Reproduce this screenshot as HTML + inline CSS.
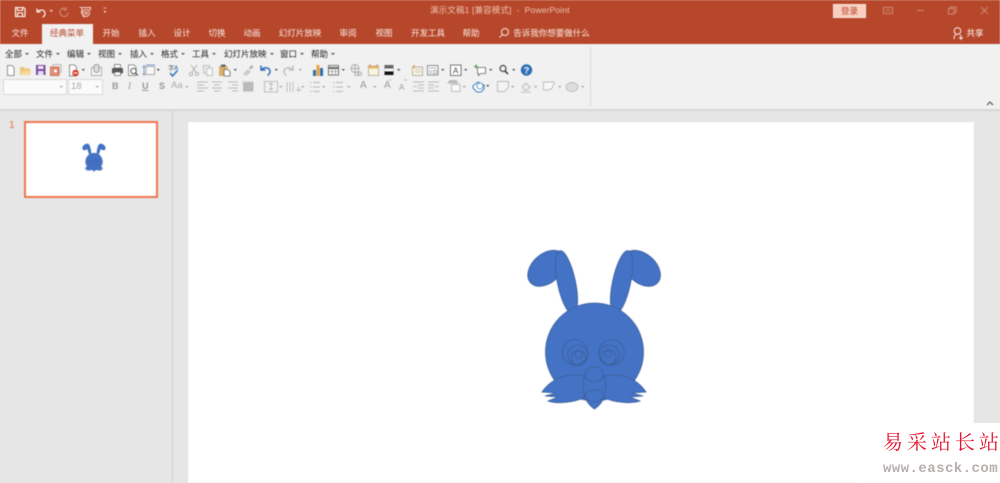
<!DOCTYPE html>
<html lang="zh"><head><meta charset="utf-8"><style>
html,body{margin:0;padding:0;width:1000px;height:483px;overflow:hidden;background:#e6e6e6}
body{position:relative;font-family:"Liberation Sans","Noto Sans CJK SC",sans-serif}
#w{position:absolute;left:0;top:0;width:1000px;height:483px;filter:blur(.4px)}
.a{position:absolute;white-space:nowrap}
.t{position:absolute;top:27px;height:12px;line-height:12px;font-size:8.5px;color:#f9ebe6;transform:translateX(-50%);white-space:nowrap}
.m{position:absolute;top:48px;height:12px;line-height:12px;font-size:8.5px;color:#222;white-space:nowrap}
.m:after{content:"";display:inline-block;border:2px solid transparent;border-top:2.5px solid #555;border-bottom:0;margin-left:3px;vertical-align:2px}
svg{position:absolute;left:0;top:0}
</style></head><body>
<div id="w">
<div class="a" style="left:0;top:0;width:1000px;height:44px;background:#b7472a"></div>
<div class="a" style="left:0;top:44px;width:1000px;height:65px;background:#f1f1f1"></div>
<div class="a" style="left:0;top:109px;width:1000px;height:2px;background:#d6d6d6"></div>
<div class="a" style="left:172px;top:111px;width:1px;height:372px;background:#cfcfcf"></div>
<div class="a" style="left:42px;top:24px;width:51px;height:21px;background:#f1f1f1"></div>
<div class="a" style="left:188px;top:122px;width:786px;height:361px;background:#fff;box-shadow:0 0 1px #ccc"></div>
<div class="a" style="left:24px;top:121px;width:130px;height:73px;background:#fff;border:2px solid #f0774f"></div>
<div class="a" style="left:9px;top:120px;font-size:10px;line-height:12px;color:#e8704a">1</div>

<div class="a" style="left:430px;top:4px;font-size:8.5px;line-height:12px;color:#f0c4b5;letter-spacing:.15px">演示文稿1 [兼容模式] &nbsp;- &nbsp;PowerPoint</div>
<div class="a" style="left:833px;top:4px;width:31px;height:12px;background:#f9cfc1;border:.5px solid #f4e4dd;text-align:center;font-size:8.5px;line-height:13px;color:#b7472a">登录</div>

<div class="t" style="left:20px">文件</div>
<div class="t" style="left:67px;color:#b7472a">经典菜单</div>
<div class="t" style="left:111px">开始</div>
<div class="t" style="left:147px">插入</div>
<div class="t" style="left:182px">设计</div>
<div class="t" style="left:217px">切换</div>
<div class="t" style="left:252px">动画</div>
<div class="t" style="left:300px">幻灯片放映</div>
<div class="t" style="left:348px">审阅</div>
<div class="t" style="left:384px">视图</div>
<div class="t" style="left:428px">开发工具</div>
<div class="t" style="left:471px">帮助</div>
<div class="t" style="left:551.5px">告诉我你想要做什么</div>
<div class="t" style="left:975px;color:#fff">共享</div>

<div class="m" style="left:5px">全部</div>
<div class="m" style="left:36px">文件</div>
<div class="m" style="left:67px">编辑</div>
<div class="m" style="left:98px">视图</div>
<div class="m" style="left:130px">插入</div>
<div class="m" style="left:161px">格式</div>
<div class="m" style="left:192px">工具</div>
<div class="m" style="left:224px">幻灯片放映</div>
<div class="m" style="left:280px">窗口</div>
<div class="m" style="left:311px">帮助</div>

<div class="a" style="left:3px;top:79px;width:62px;height:14px;background:#fbfbfb;border:1px solid #d8d8d8;box-sizing:content-box"></div>
<div class="a" style="left:68px;top:79px;width:33px;height:14px;background:#fbfbfb;border:1px solid #d8d8d8"></div>
<div class="a" style="left:71px;top:81px;font-size:9.5px;line-height:12px;color:#aaa">18</div>
<div class="a" style="left:112px;top:80px;font-size:9px;line-height:12px;font-weight:bold;color:#999">B</div>
<div class="a" style="left:128px;top:80px;font-size:9px;line-height:12px;font-style:italic;font-family:'Liberation Serif',serif;color:#999">I</div>
<div class="a" style="left:142px;top:80px;font-size:9px;line-height:12px;font-weight:bold;color:#999;text-decoration:underline">U</div>
<div class="a" style="left:159px;top:80px;font-size:9px;line-height:12px;font-weight:bold;color:#999">S</div>
<div class="a" style="left:171px;top:80px;font-size:9.5px;line-height:12px;color:#aaa">Aa</div>
<div class="a" style="left:360px;top:80px;font-size:10px;line-height:12px;color:#999">A</div>
<div class="a" style="left:384px;top:80px;font-size:10px;line-height:12px;color:#999">A</div>
<div class="a" style="left:399px;top:82px;font-size:8px;line-height:12px;color:#999">A</div>

<svg width="1000" height="483" viewBox="0 0 1000 483">
<defs>
<g id="rabbit" fill="#4472c4" stroke="#3c5f9c" stroke-width=".8">
<ellipse cx="546.500" cy="268.300" rx="21.500" ry="14.500" transform="rotate(-42 546.500 268.300)"/>
<ellipse cx="641.700" cy="268.300" rx="21.500" ry="14.500" transform="rotate(42 641.700 268.300)"/>
<ellipse cx="566.500" cy="282.500" rx="9" ry="32.500" transform="rotate(-12 566.500 282.500)"/>
<ellipse cx="621.500" cy="282.500" rx="9" ry="32.500" transform="rotate(12 621.500 282.500)"/>
<circle cx="594.500" cy="352" r="49"/>
<g fill="none">
<circle cx="575" cy="352.300" r="12.700"/><circle cx="577.700" cy="355" r="10"/><circle cx="578.300" cy="358" r="7.500"/><circle cx="578.700" cy="354.300" r="3.700"/>
<circle cx="611.700" cy="352.300" r="12.700"/><circle cx="609.300" cy="355" r="10"/><circle cx="608.700" cy="357.300" r="7.300"/><circle cx="608.300" cy="354" r="3.300"/>
</g>
<path d="M587 377C572 372 553 376 542 392L556 393 545 396 558 397 548 401 C556 404 574 403 585 397Z"/>
<path d="M602 377C617 372 635 376 646 392L632 393 643 396 630 397 640 401 C632 404 614 403 603 397Z"/>
<path d="M584 378C582 392 584 402 594.500 409 605 402 607 392 605 378Z"/>
<ellipse cx="594.300" cy="374.300" rx="9" ry="7.500"/>
<ellipse cx="594.300" cy="395.700" rx="9" ry="6"/>
</g>
</defs>
<use href="#rabbit"/>
<g transform="translate(-10 100) scale(.175)"><use href="#rabbit"/></g>

<!-- QAT -->
<g fill="none" stroke="#fff" stroke-width="1.1">
<path d="M15.500 7.500h8l1.500 1.500v7.500h-9.500z"/><path d="M17.500 7.500v3h5v-3M17.500 16.500v-3.500h5v3.500"/>
<path d="M37 8.500v3.500h3.500M37.500 12c2-3 7-2.500 7.500 1 .2 2-1 3.500-2.500 4"/>
</g>
<path d="M49.500 10h3.500l-1.750 2z M103.500 11h3l-1.500 2z" fill="#f4dcd3"/>
<g fill="none" stroke="#cf8a75" stroke-width="1.1"><path d="M66 7v3h-3M66 9c-3-2-6 0-6 3s3 5 5 4.500 3-2 3-4"/></g>
<g fill="none" stroke="#f2d7cd" stroke-width="1"><path d="M79.500 7.500h11v2h-1.500M82 8v3.500"/><circle cx="86" cy="13" r="3.500"/><circle cx="86" cy="13" r="1.300"/><path d="M81 11.500l3 6"/></g>
<path d="M103.500 8h3" stroke="#f2d7cd" stroke-width=".8"/>

<!-- win controls -->
<g fill="none" stroke="#cf8a75" stroke-width="1">
<rect x="883.500" y="7.500" width="9" height="6"/><path d="M886 11.500l2-2 2 2"/>
<path d="M917 10.500h7"/>
<rect x="948.500" y="8.500" width="5.500" height="5.500"/><path d="M950.500 8.500v-1.500h5.500v5.500h-2"/>
<path d="M981 7l7 7M988 7l-7 7"/>
</g>
<!-- search tell me -->
<g fill="none" stroke="#f6e3dc" stroke-width="1"><circle cx="505" cy="32" r="3.500"/><path d="M502.500 34.500l-3 3"/></g>
<!-- share -->
<g fill="none" stroke="#fff" stroke-width=".9"><circle cx="957.500" cy="31" r="3.300"/><path d="M954 39c0-2.500 1-4 2-4.500M960 35l1 1M959 38h4M961 36v4"/></g>

<!-- row 2 -->
<path d="M7.500 65.500h4.500l2 2v8h-6.500z" fill="#fff" stroke="#777" stroke-width=".8"/>
<path d="M20 75v-8h4l1 1.500h5v6.500z" fill="#f0c47a"/><path d="M20 75l2-4h9.500l-2 4z" fill="#f6d699"/>
<rect x="36" y="65" width="9.500" height="10" fill="#7a4a9e"/><rect x="38" y="66" width="5.500" height="3" fill="#f1e8f5"/><rect x="38" y="71" width="5.500" height="4" fill="#e7dcee"/>
<rect x="53" y="64.500" width="8" height="8" fill="#f1f1f1" stroke="#aaa" stroke-width=".8"/><rect x="50.500" y="67" width="8.500" height="8.500" fill="#e49a84" stroke="#c9563c" stroke-width=".8"/><rect x="53.500" y="69" width="4" height="4" fill="#fff" stroke="#c9563c" stroke-width=".7"/>
<path d="M69.500 65h5l2 2v9h-7z" fill="#fff" stroke="#777" stroke-width=".8"/><circle cx="75.500" cy="73" r="3.300" fill="#d8442d"/><path d="M73.500 73h4" stroke="#fff" stroke-width="1"/>
<rect x="91.500" y="67.500" width="10" height="8" fill="#fbfbfb" stroke="#999" stroke-width=".8"/><rect x="94" y="64.500" width="5" height="8" rx="2" fill="#ddd" stroke="#888" stroke-width=".8"/>
<rect x="112" y="68" width="11" height="5.500" rx="1" fill="#555"/><rect x="114.500" y="64.500" width="6" height="3.500" fill="#fff" stroke="#666" stroke-width=".7"/><rect x="114.500" y="72" width="6" height="3.500" fill="#fff" stroke="#666" stroke-width=".7"/>
<path d="M128.500 65h5.500l2 2v8.500h-7.500z" fill="#fff" stroke="#777" stroke-width=".8"/><circle cx="133.500" cy="71" r="2.700" fill="#fff" stroke="#555" stroke-width="1"/><path d="M135.500 73l2.500 2.500" stroke="#555" stroke-width="1.100"/>
<rect x="146" y="66.500" width="8.500" height="8" fill="#f8f8f8" stroke="#999" stroke-width=".8"/><path d="M144 65v11M142.500 67h3M142.500 74h3" stroke="#5b8ac4" stroke-width=".8" fill="none"/><path d="M146 65h9" stroke="#5b8ac4" stroke-width=".8"/>
<text x="168" y="70" font-size="6.500" fill="#666" font-family="'Noto Sans CJK SC',sans-serif">字</text><text x="174" y="70" font-size="6" font-weight="bold" fill="#3a76b8">A</text><path d="M170 73l2.500 3 5-5.500" fill="none" stroke="#2b6fb6" stroke-width="1.400"/>
<g fill="none" stroke="#aaa" stroke-width=".9"><path d="M191 65l5 7M197 65l-5 7"/><circle cx="191" cy="74" r="1.700"/><circle cx="197" cy="74" r="1.700"/></g>
<rect x="203.500" y="65.500" width="6" height="7.500" fill="#eee" stroke="#b5b5b5" stroke-width=".8"/><rect x="206.500" y="68" width="6" height="7.500" fill="#f4f4f4" stroke="#b5b5b5" stroke-width=".8"/>
<rect x="219" y="66" width="8.500" height="10" fill="#dcb069"/><rect x="221" y="64.500" width="4.500" height="2.500" fill="#666"/><path d="M224 69.500h4l2 2v4.500h-6z" fill="#fff" stroke="#666" stroke-width=".8"/>
<path d="M243 74l5-5 3 3-5 4z" fill="#ccc"/><path d="M249 68l3-3 1.500 1.500-3 3z" fill="#aaa"/>
<g fill="none" stroke="#2f6fb7" stroke-width="1.500"><path d="M261 65.500v4.500h4.500M261.500 70c2.500-3.500 8-2.500 8.500 1 .2 2-1 3.500-2.500 4.500"/></g>
<g fill="none" stroke="#bbb" stroke-width="1.300"><path d="M293 65.500v4.500h-4.500M292.500 70c-2.500-3.500-8-2.500-8.500 1-.2 2 1 3.500 2.500 4.500"/></g>
<rect x="313" y="70" width="3" height="6" fill="#2f6fa8"/><rect x="316.500" y="65" width="3" height="11" fill="#e8a33d"/><rect x="320" y="68" width="3" height="8" fill="#2f6fa8"/>
<rect x="328.500" y="65.500" width="10" height="9.500" fill="#fff" stroke="#666" stroke-width=".9"/><path d="M328.500 68h10" stroke="#666" stroke-width="2"/><path d="M328.500 71.500h10M332 68v7M335.500 68v7" stroke="#777" stroke-width=".6"/>
<g fill="none" stroke="#aaa" stroke-width=".9"><circle cx="355" cy="68.500" r="4"/><path d="M351 68.500h8M355 64.500v8"/><rect x="355" y="72" width="3.500" height="3.500" rx="1.500"/><rect x="358" y="72" width="3.500" height="3.500" rx="1.500"/></g>
<rect x="368.500" y="66" width="10" height="9.500" fill="#fbf3dc" stroke="#999" stroke-width=".7"/><path d="M370 67v-2.500M377 67v-2.500" stroke="#d95a40" stroke-width="1"/><path d="M369 66h9v2.500h-9z" fill="#e9b65f"/>
<rect x="384.500" y="65" width="9" height="3.500" fill="#666"/><rect x="384.500" y="68.500" width="9" height="3" fill="#fff" stroke="#999" stroke-width=".4"/><rect x="384.500" y="71.500" width="9" height="3.500" fill="#111"/>
<rect x="412.500" y="67" width="10" height="8.500" fill="#fbf3dc" stroke="#999" stroke-width=".7"/><path d="M414 65v3" stroke="#e0a23d" stroke-width="1.500"/><path d="M415 69.500h6M415 72h6" stroke="#bbb" stroke-width=".7"/>
<rect x="427.500" y="65.500" width="10.500" height="9.500" fill="#fbfbfb" stroke="#777" stroke-width=".8"/><path d="M429 68h7.500M429 71h3M429 73h3M433.500 70.500h3v3h-3z" stroke="#999" stroke-width=".7" fill="none"/>
<rect x="450.500" y="65" width="10.500" height="10.500" fill="#fff" stroke="#555" stroke-width=".8"/><text x="455.700" y="73.500" font-size="8" fill="#444" text-anchor="middle">A</text>
<path d="M477.500 67.500h8v6h-5l-2 2v-2h-1z" fill="#fff" stroke="#666" stroke-width=".8"/><path d="M476 64.500v4M474 66.500h4" stroke="#3aa04b" stroke-width="1"/>
<circle cx="503" cy="68.500" r="3" fill="none" stroke="#444" stroke-width="1.200"/><path d="M505 71l3 3" stroke="#444" stroke-width="1.600"/>
<circle cx="526.500" cy="70" r="5.700" fill="#2c6fb5"/><text x="526.500" y="73.500" font-size="9.500" font-weight="bold" fill="#fff" text-anchor="middle">?</text>

<!-- row 3 -->
<g stroke="#b9b9b9" stroke-width=".9" fill="none">
<path d="M197 82h11M197 85h7M197 88h11M197 91h7"/>
<path d="M212 82h10M214 85h6M212 88h10M214 91h6"/>
<path d="M228 82h10M232 85h6M228 88h10M232 91h6"/>
<path d="M243 82v-1M246 82v-1M249 82v-1M252 82v-1"/><rect x="243.500" y="82.500" width="9.500" height="8.500" fill="#bbb"/>
<rect x="264.500" y="81.500" width="13" height="10.500"/><path d="M271 83v7M269 84.500l2-1.500 2 1.500M269 88.500l2 1.500 2-1.500"/>
<path d="M287 82v10M290 82v10M293 82v10"/><path d="M296 90h5M298.500 87v5"/>
<path d="M313 82.500h7M313 87h7M313 91.500h7M310 82.500h1.500M310 87h1.500M310 91.500h1.500"/>
<path d="M336 82.500h7M336 87h7M336 91.500h7M333 82.500h1.500M333 87h1.500M333 91.500h1.500"/>
<path d="M413 82h11M418 85h6M418 88h6M413 91h11M417 86.500h-4"/>
<path d="M428 82h11M428 85h6M428 88h6M428 91h11M435 86.500h4"/>
<rect x="451.500" y="84.500" width="8.500" height="7" fill="#f8f8f8"/>
<path d="M448 83l2-2.500h6l2 2.500z" fill="#bbb"/>
<path d="M497.500 81.500h11v6l-4 4h-7z" fill="#f4f4f4"/>
<path d="M543.500 82h10l1 1-3 6-5 1h-3z" fill="#f8f8f8"/>
<ellipse cx="572" cy="87" rx="6" ry="4.500" fill="#ddd"/>
<path d="M521 92h10" stroke="#ccc" stroke-width="1.500"/><path d="M522 87l4-4 4 4-3 3h-2z" fill="#eee"/>
</g>
<path d="M473 86l5-4 3 2 3 1v4l-3 3h-4l-4-4z" fill="#fff" stroke="#3f7cc0" stroke-width="1"/><circle cx="480" cy="86" r="3" fill="#fff" stroke="#3f7cc0" stroke-width=".8"/>
<path d="M388.500 80h3M404 80h3" stroke="#aaa" stroke-width=".8"/>

<!-- carets -->
<g fill="#555">
<path d="M81.500 69h3.500l-1.750 2zM156.500 69h3.500l-1.750 2zM233.500 69h3.500l-1.750 2zM274.500 69h3.500l-1.750 2zM341.500 69h3.500l-1.750 2zM397 69h3.500l-1.750 2zM441 69h3.500l-1.750 2zM464 69h3.500l-1.750 2zM489 69h3.500l-1.750 2zM512 69h3.500l-1.750 2zM486 85h3.500l-1.750 2z"/>
</g>
<g fill="#aaa">
<path d="M298.500 69h3.500l-1.750 2zM59.500 86h3.500l-1.750 2zM95.500 86h3.500l-1.750 2zM185 86h3.500l-1.750 2zM279 86h3.500l-1.750 2zM301 86h3.500l-1.750 2zM322 86h3.500l-1.750 2zM347 86h3.500l-1.750 2zM373 86h3.500l-1.750 2zM462.500 86h3.500l-1.750 2zM511 86h3.500l-1.750 2zM534 86h3.500l-1.750 2zM558 86h3.500l-1.750 2zM581 86h3.500l-1.750 2z"/>
</g>
<path d="M590.500 47v59" stroke="#d9d9d9" stroke-width="1"/>
<path d="M987 105l3-3 3 3" fill="none" stroke="#666" stroke-width="1.300"/>
</svg>
</div>

<div class="a" style="left:974px;top:423px;width:26px;height:60px;background:#fff"></div>
<div class="a" style="left:860px;top:425px;width:114px;height:58px;background:#fff"></div>
<div class="a" style="left:883px;top:431px;font-size:20px;line-height:24px;letter-spacing:4px;color:#e8132d;font-family:'Liberation Serif','Noto Serif CJK SC',serif">易采站长站</div>
<div class="a" style="left:883px;top:461px;font-size:14px;line-height:16px;letter-spacing:.45px;color:#b9aeae;font-family:'Liberation Mono',monospace;font-weight:bold">www.easck.com</div>
</body></html>
